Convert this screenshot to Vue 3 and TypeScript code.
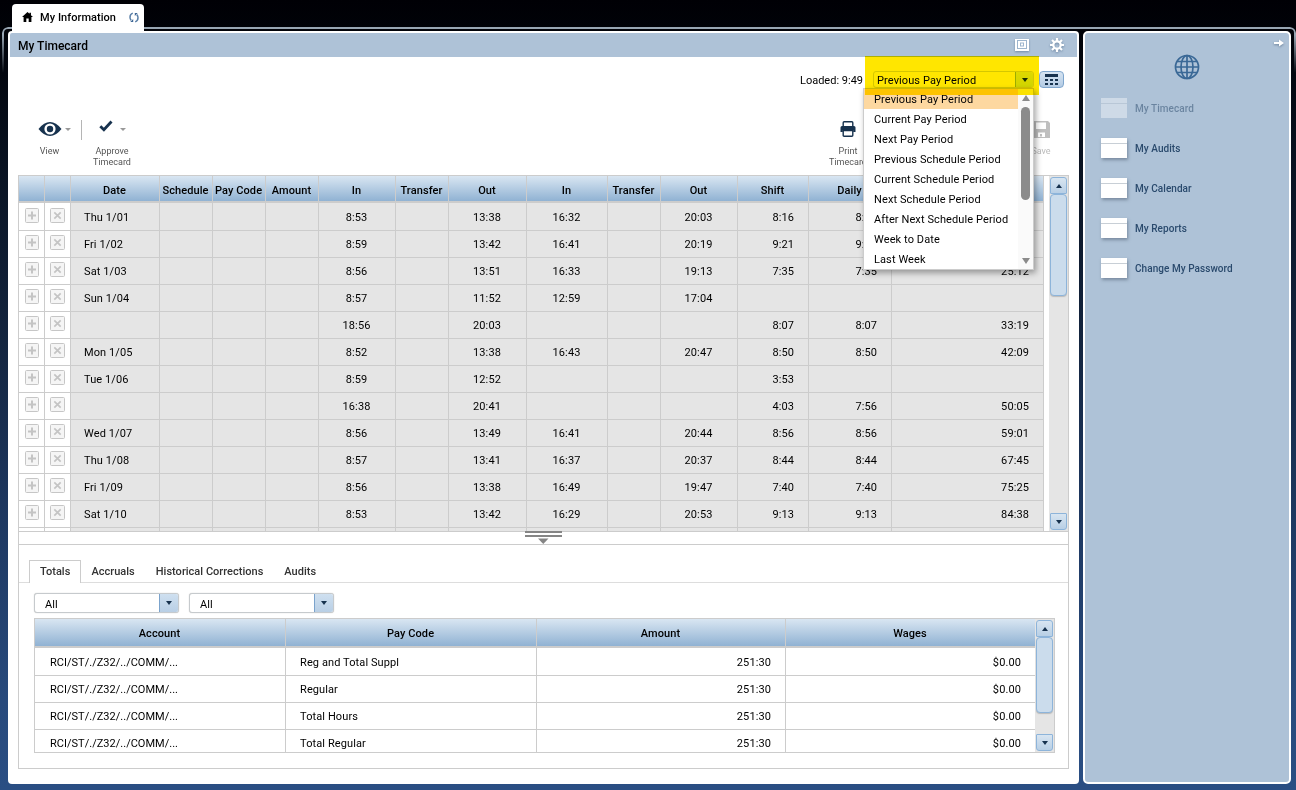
<script setup lang="ts">
interface PunchRow {
  date: string
  in1: string
  out1: string
  in2: string
  out2: string
  shift: string
  daily: string
  total: string
}

const row = (date: string, in1: string, out1: string, in2: string, out2: string, shift: string, daily: string, total: string): PunchRow =>
  ({ date, in1, out1, in2, out2, shift, daily, total })

const punches: PunchRow[] = [
  row('Thu 1/01', '8:53', '13:38', '16:32', '20:03', '8:16', '8:16', '8:16'),
  row('Fri 1/02', '8:59', '13:42', '16:41', '20:19', '9:21', '9:21', '17:37'),
  row('Sat 1/03', '8:56', '13:51', '16:33', '19:13', '7:35', '7:35', '25:12'),
  row('Sun 1/04', '8:57', '11:52', '12:59', '17:04', '', '', ''),
  row('', '18:56', '20:03', '', '', '8:07', '8:07', '33:19'),
  row('Mon 1/05', '8:52', '13:38', '16:43', '20:47', '8:50', '8:50', '42:09'),
  row('Tue 1/06', '8:59', '12:52', '', '', '3:53', '', ''),
  row('', '16:38', '20:41', '', '', '4:03', '7:56', '50:05'),
  row('Wed 1/07', '8:56', '13:49', '16:41', '20:44', '8:56', '8:56', '59:01'),
  row('Thu 1/08', '8:57', '13:41', '16:37', '20:37', '8:44', '8:44', '67:45'),
  row('Fri 1/09', '8:56', '13:38', '16:49', '19:47', '7:40', '7:40', '75:25'),
  row('Sat 1/10', '8:53', '13:42', '16:29', '20:53', '9:13', '9:13', '84:38'),
]

const headers = ['', '', 'Date', 'Schedule', 'Pay Code', 'Amount', 'In', 'Transfer', 'Out', 'In', 'Transfer', 'Out', 'Shift', 'Daily', '']
const periods = ['Previous Pay Period', 'Current Pay Period', 'Next Pay Period', 'Previous Schedule Period', 'Current Schedule Period', 'Next Schedule Period', 'After Next Schedule Period', 'Week to Date', 'Last Week']
const totals = ['Reg and Total Suppl', 'Regular', 'Total Hours', 'Total Regular']
const links = ['My Timecard', 'My Audits', 'My Calendar', 'My Reports', 'Change My Password']
const tabs = ['Totals', 'Accruals', 'Historical Corrections', 'Audits']
</script>

<template>
  <div class="desktop">
    <div class="frame"></div>
    <div class="tabstrip">
      <div class="wtab">
        <svg class="home" viewBox="0 0 12 11" width="11" height="10"><path d="M6 0L0 5.600h1.700V11h3V7.200h2.600V11h3V5.600H12L9.800 3.500V.8H8.200V2z" fill="#000" /></svg>
        <span>My Information</span>
        <svg class="refresh" viewBox="0 0 10 11" width="10" height="11"><path d="M3.800 1.100Q1 2 1 5.200q0 2 1.200 3.200M6.200 9.900Q9 9 9 5.800q0-2-1.200-3.200" fill="none" stroke="#5c80a8" stroke-width="1.500" /><path d="M1.300 9.900h2.900V7zM8.700 1.100H5.800V4z" fill="#3d6796" /></svg>
      </div>
    </div>
    <div class="columns">
      <main class="panel">
        <header class="title">
          <span>My Timecard</span>
          <svg class="max" viewBox="0 0 14 12" width="14" height="12"><rect width="14" height="12" fill="#fff" /><rect x="2.500" y="1.500" width="9" height="8" fill="none" stroke="#9db5ce" /><rect x="5.500" y="4" width="3" height="3" fill="#fff" stroke="#9db5ce" /></svg>
          <svg class="gear" viewBox="-7 -7 14 14" width="14" height="14"><g fill="none" stroke="#fff"><circle r="3.700" stroke-width="2.300" /><path d="M0-4v-3M0 4v3M-4 0h-3M4 0h3M-3-3l-2-2M3-3l2-2M-3 3l-2 2M3 3l2 2" stroke-width="2.200" /></g></svg>
        </header>
        <div class="period">
          <span class="loaded">Loaded: 9:49</span>
          <div class="combo big"><span>Previous Pay Period</span><i><b class="tri down"></b></i></div>
          <div class="calbtn"><svg viewBox="0 0 13 12" width="13" height="12"><path d="M0 0h13v3H0zM0 5h3v2H0zM5 5h3v2H5zM10 5h3v2h-3zM0 9h3v2H0zM5 9h3v2H5zM10 9h3v2h-3z" fill="#17324e" /></svg></div>
        </div>
        <div class="tools">
          <div class="tool view">
            <div class="ico"><svg viewBox="0 0 24 16" width="24" height="16"><path d="M.5 8Q6 1 12 1t11.500 7Q18 15 12 15T.5 8z" fill="#17324e" /><circle cx="12" cy="8" r="5.600" fill="#fff" /><circle cx="12" cy="8" r="3.200" fill="#17324e" /></svg><b class="tri down gray"></b></div>
            <span>View</span>
          </div>
          <div class="sep"></div>
          <div class="tool approve">
            <div class="ico"><svg viewBox="0 0 14 12" width="14" height="12"><path d="M1.300 6.200l3.600 3.600L12.500 1.500" fill="none" stroke="#17324e" stroke-width="2.800" /></svg><b class="tri down gray"></b></div>
            <span>Approve<br />Timecard</span>
          </div>
          <div class="spacer"></div>
          <div class="tool print">
            <div class="ico"><svg viewBox="0 0 16 16" width="16" height="16"><path d="M3.200 5V1.700q0-.9.900-.9h7.800q.9 0 .9.900V5" fill="none" stroke="#17324e" stroke-width="1.400" /><path d="M2 5h12q1.500 0 1.500 1.500V11h-2.300V9H2.800v2H.5V6.500Q.5 5 2 5z" fill="#17324e" /><path d="M3.200 9.500h9.600v4.800q0 .9-.9.900H4.100q-.9 0-.9-.9z" fill="#fff" stroke="#17324e" stroke-width="1.400" /></svg></div>
            <span>Print<br />Timecard</span>
          </div>
          <div class="tool save">
            <div class="ico"><svg viewBox="0 0 17 17" width="17" height="17"><path d="M0 0h15l2 2v15H0z" fill="#bfbfbf" /><path d="M3 1.500h10v6.500H3zM5 11.500h7V16H5z" fill="#fff" /><path d="M7 13h2v2.500H7z" fill="#bfbfbf" /></svg></div>
            <span>Save</span>
          </div>
        </div>

        <section class="work">
          <div class="upper">
            <div class="grid">
              <div v-for="(h, i) in headers" :key="'h' + i" class="th">{{ h }}</div>
              <template v-for="(p, i) in punches" :key="i">
                <div class="td act"><svg viewBox="0 0 14 15" width="14" height="15"><rect x=".5" y=".5" width="13" height="14" rx="1" fill="#f5f5f5" stroke="#c6c6c6" /><path d="M7 3.500v8M3 7.500h8" stroke="#c4c4c4" stroke-width="2" /></svg></div>
                <div class="td act"><svg viewBox="0 0 15 15" width="15" height="15"><rect x=".5" y=".5" width="14" height="14" rx="1" fill="#f5f5f5" stroke="#c6c6c6" /><path d="M4.300 4.300l6.400 6.400M10.700 4.300l-6.400 6.400" stroke="#c4c4c4" stroke-width="1.700" /></svg></div>
                <div class="td date">{{ p.date }}</div>
                <div class="td"></div>
                <div class="td"></div>
                <div class="td"></div>
                <div class="td">{{ p.in1 }}</div>
                <div class="td"></div>
                <div class="td">{{ p.out1 }}</div>
                <div class="td">{{ p.in2 }}</div>
                <div class="td"></div>
                <div class="td">{{ p.out2 }}</div>
                <div class="td num">{{ p.shift }}</div>
                <div class="td num">{{ p.daily }}</div>
                <div class="td num">{{ p.total }}</div>
              </template>
              <div v-for="n in 15" :key="'e' + n" class="td" :class="{ act: n < 3 }"></div>
            </div>
            <div class="scroll">
              <div class="sbtn up"><b class="tri up"></b></div>
              <div class="thumb long"></div>
              <div class="sbtn end"><b class="tri down"></b></div>
            </div>
          </div>
          <div class="splitter"><svg viewBox="0 0 37 13" width="37" height="13"><path d="M0 0h37v2H0zM0 4h37v2H0z" fill="#858585" /><path d="M13 7.500h10.500L18.250 13z" fill="#858585" /></svg></div>
          <div class="tabs">
            <div v-for="(t, i) in tabs" :key="t" class="tab" :class="{ active: i === 0 }">{{ t }}</div>
          </div>
          <div class="filters">
            <div v-for="n in 2" :key="n" class="combo"><span>All</span><i><b class="tri down"></b></i></div>
          </div>
          <div class="totals">
            <div class="tgrid">
              <div class="th">Account</div><div class="th">Pay Code</div><div class="th">Amount</div><div class="th">Wages</div>
              <template v-for="t in totals" :key="t">
                <div class="tc acct">RCI/ST/./Z32/../COMM/...</div>
                <div class="tc">{{ t }}</div>
                <div class="tc num">251:30</div>
                <div class="tc num">$0.00</div>
              </template>
            </div>
            <div class="scroll">
              <div class="sbtn up"><b class="tri up"></b></div>
              <div class="thumb"></div>
              <div class="sbtn end"><b class="tri down"></b></div>
            </div>
          </div>
        </section>
      </main>

      <aside class="side">
        <svg class="arrow" viewBox="0 0 10 8" width="10" height="8"><path d="M0 3h5V0.500L10 4 5 7.500V5H0z" fill="#fff" /></svg>
        <svg class="globe" viewBox="-13 -13 26 26" width="26" height="26"><g fill="none" stroke="#3a6896" stroke-width="1.700"><circle r="11.500" /><ellipse rx="6" ry="11.500" /><path d="M0-11.500v23M-11.500 0h23M-10-5.500h20M-10 5.500h20" /></g></svg>
        <nav>
          <div v-for="(l, i) in links" :key="l" class="link" :class="{ off: i === 0 }"><span class="card"></span><span class="name">{{ l }}</span></div>
        </nav>
      </aside>
    </div>

    <div class="menu">
      <div class="opts"><div v-for="(p, i) in periods" :key="p" class="opt" :class="{ sel: i === 0 }">{{ p }}</div></div>
      <div class="mbar"><b class="mtri up"></b><div class="mthumb"></div><b class="mtri down"></b></div>
    </div>
    <div class="marker"></div>
  </div>
</template>

<style>
html, body { margin: 0; overflow: hidden; }
</style>

<style scoped>
* { box-sizing: border-box; }
.desktop { position: relative; width: 1296px; height: 790px; overflow: hidden; display: flex; flex-direction: column; font: 11px/14px Roboto, "Liberation Sans", sans-serif; letter-spacing: .1px; color: #000; background: linear-gradient(#000005 0, #010309 40px, #0a1424 180px, #14253f 340px, #1e3861 520px, #284a7c 700px, #2a4e83 790px); }
.frame { position: absolute; left: 2px; top: 27px; width: 1294px; height: 50px; border: 2px solid #98a6b3; border-bottom: 0; border-radius: 6px 6px 0 0; -webkit-mask-image: linear-gradient(#000 8px, transparent 46px); mask-image: linear-gradient(#000 8px, transparent 46px); }
.tabstrip { height: 31px; padding: 4px 0 0 12px; position: relative; }
.wtab { width: 132px; height: 27px; background: #fff; border-radius: 4px 4px 0 0; display: flex; align-items: center; font-weight: 500; padding: 0 5px 0 10px; }
.home { margin-top: -1px; }
.wtab span { margin-left: 7px; letter-spacing: .05px; }
.refresh { margin-left: auto; }
.columns { display: flex; gap: 4px; padding-left: 8px; height: 753px; position: relative; }
.panel { width: 1071px; background: #fff; border-radius: 4px; padding: 2px; display: flex; flex-direction: column; }
.title { height: 24px; background: #aec2d7; display: flex; align-items: center; padding: 0 13px 0 8px; font-size: 12px; font-weight: 500; letter-spacing: 0; border-radius: 2px 2px 0 0; }
.title span { padding-top: 2px; }
.max { margin-left: auto; }
.gear { margin-left: 21px; }
.title svg { filter: drop-shadow(0 1px 1px #718aa6); }
.period { height: 46px; display: flex; align-items: center; justify-content: flex-end; padding-right: 13px; }
.loaded { margin-right: 10px; letter-spacing: 0; padding-top: 2px; }
.combo { width: 145px; height: 20px; border: 1px solid #c6cacd; border-radius: 3px; display: flex; align-items: center; background: #fff; overflow: hidden; box-shadow: 0 0 1px #bbb; }
.combo span { flex: 1; padding: 3px 0 0 10px; }
.combo i { width: 19px; height: 18px; border-left: 1px solid #7ba3cc; background: linear-gradient(#cfe0f0, #b9cfe5); display: flex; align-items: center; justify-content: center; }
.combo .tri { border-left-width: 3px; border-right-width: 3px; }
.combo.big { width: 161px; height: 17px; margin-top: -1px; border-color: #d5dde2; box-shadow: none; }
.combo.big span { padding: 2px 0 0 3px; }
.combo.big i { background: linear-gradient(#dff2f8, #cfeaf2); border-color: #9ac0dd; width: 18px; }
.calbtn { width: 25px; height: 17px; margin: -1px 0 0 5px; border: 1px solid #7fa6cd; border-radius: 4px; background: linear-gradient(#d6e4f2, #b3cbe4); display: flex; align-items: center; justify-content: center; }
.tri { width: 0; height: 0; border: 4px solid transparent; flex: none; }
.tri.down { border-top-color: #17324e; border-bottom: 0; }
.tri.up { border-bottom-color: #17324e; border-top: 0; }
.tri.gray { border-width: 3px; border-top-color: #999; border-bottom: 0; }
.tools { height: 72px; display: flex; padding: 16px 13px 0 28px; }
.tool { font-size: 9px; line-height: 11px; color: #555; text-align: center; letter-spacing: 0; }
.tool .ico { height: 20px; display: flex; align-items: center; margin-bottom: 7px; }
.view { width: 35px; }
.view .ico { gap: 3px; }
.view span { display: block; width: 23px; }
.sep { width: 1px; height: 20px; background: #b5b5b5; margin: 1px 12px 0 8px; }
.approve { width: 38px; }
.approve .ico { gap: 7px; padding-left: 5px; }
.approve svg { margin-top: -6px; }
.approve span { display: block; margin-left: -2px; }
.spacer { flex: 1; }
.print { width: 38px; }
.print .ico { justify-content: center; }
.save { width: 24px; margin: 0 11px 0 162px; color: #bbb; }
.save .ico { justify-content: center; }
.work { margin: 0 9px 0 8px; width: 1051px; height: 594px; border: 1px solid #ccc; display: flex; flex-direction: column; }
.upper { display: flex; justify-content: space-between; height: 356px; overflow: hidden; border-bottom: 1px solid #ccc; }
.grid { display: grid; grid-template-columns: 26px 26px 89px 53px 53px 53px 77px 53px 78px 81px 53px 77px 71px 83px 152px; grid-template-rows: 27px 28px; grid-auto-rows: 27px; width: 1025px; }
.th { display: flex; align-items: center; justify-content: center; font-weight: 500; background: linear-gradient(#d9e6f2, #90b2d3); border-right: 1px solid #ccc; border-bottom: 2px solid #ccc; padding: 4px 1px 0 0; white-space: nowrap; }
.tgrid .th { padding-top: 2px; }
.td { display: flex; align-items: center; justify-content: center; background: #e5e5e5; border-right: 1px solid #ccc; border-bottom: 1px solid #ccc; padding: 2px 1px 0 0; }
.td.act { background: #fff; padding: 0 0 3px; }
.td.date { justify-content: flex-start; padding-left: 13px; }
.td.num, .tc.num { justify-content: flex-end; padding-right: 14px; }
.scroll { width: 19px; background: #e5e5e5; display: flex; flex-direction: column; padding: 1px; }
.sbtn { width: 17px; height: 17px; border: 1px solid #8db4da; border-radius: 3px 3px 1px 1px; background: linear-gradient(#d8e5f1, #b8cfe5); display: flex; align-items: center; justify-content: center; flex: none; }
.sbtn .tri { border-left-width: 3px; border-right-width: 3px; }
.sbtn.end { margin-top: auto; border-radius: 1px 1px 3px 3px; }
.thumb { width: 17px; height: 76px; border: 1px solid #8db4da; border-radius: 4px; background: #cbdcec; box-shadow: 0 1px 1px #bbb; flex: none; }
.thumb.long { height: 102px; }
.splitter { height: 13px; border-bottom: 1px solid #ccc; padding-left: 506px; }
.splitter svg { display: block; margin-top: -1px; }
.tabs { margin-top: 15px; height: 23px; padding-left: 10px; display: flex; font-weight: 500; color: #333; border-bottom: 1px solid #ddd; letter-spacing: .02px; }
.tab { height: 23px; padding: 3px 10px 0; border: 1px solid transparent; border-bottom: 0; line-height: 15px; margin-right: -1px; white-space: nowrap; }
.tab.active { border-color: #ccc; background: #fff; }
.filters { display: flex; gap: 10px; padding: 10px 0 5px 15px; }
.totals { width: 1021px; height: 135px; margin-left: 15px; border: 1px solid #ccc; display: flex; overflow: hidden; }
.tgrid { display: grid; grid-template-columns: 251px 251px 249px 249px; grid-template-rows: 29px 28px; grid-auto-rows: 27px; width: 1000px; height: 133px; }
.tgrid .th:nth-child(4) { border-right: 0; }
.tc { display: flex; align-items: center; padding: 2px 0 0 14px; border-right: 1px solid #ccc; border-bottom: 1px solid #ccc; }
.tc:nth-child(4n) { border-right: 0; }
.tc.acct { padding-left: 15px; letter-spacing: .02px; }
.side { width: 208px; border: 2px solid #fff; border-radius: 5px; background: #aec2d7; position: relative; color: #17375a; letter-spacing: 0.05px; }
.arrow { position: absolute; right: 5px; top: 6px; filter: drop-shadow(0 1px 1px #70869e); }
.globe { display: block; margin: 21px auto 0 89px; }
nav { padding: 8px 0 0 16px; font-size: 10px; font-weight: 500; }
.link { height: 40px; display: flex; align-items: center; gap: 8px; color: #2a4a6d; }
.name { padding-top: 2px; }
.card { width: 26px; height: 20px; background: linear-gradient(#fff 5px, #c8cfd6 5px, #c8cfd6 6px, #fff 6px); box-shadow: 1px 2px 3px rgba(70, 85, 105, .5); }
.link.off { color: rgba(23, 55, 90, .45); }
.off .card { opacity: .4; box-shadow: none; }
.menu { position: absolute; left: 863px; top: 88px; width: 171px; height: 182px; background: #fff; border: 1px solid #ccc; box-shadow: 2px 3px 6px rgba(0, 0, 0, .35); display: flex; }
.opts { width: 154px; }
.opt { height: 20px; line-height: 20px; padding: 1px 0 0 10px; white-space: nowrap; }
.sel { background: #fdd8a0; }
.mbar { width: 15px; background: #fafafa; display: flex; flex-direction: column; align-items: center; padding: 6px 0 5px; }
.mthumb { width: 9px; height: 93px; border-radius: 5px; background: #8b8b8b; margin: 6px 0 auto; }
.mtri { width: 0; border: 4px solid transparent; }
.mtri.up { border-top: 0; border-bottom: 6px solid #8b8b8b; }
.mtri.down { border-bottom: 0; border-top: 6px solid #8b8b8b; }
.marker { position: absolute; left: 865px; top: 56px; width: 174px; height: 39px; background: #ffe600; mix-blend-mode: multiply; }
</style>
